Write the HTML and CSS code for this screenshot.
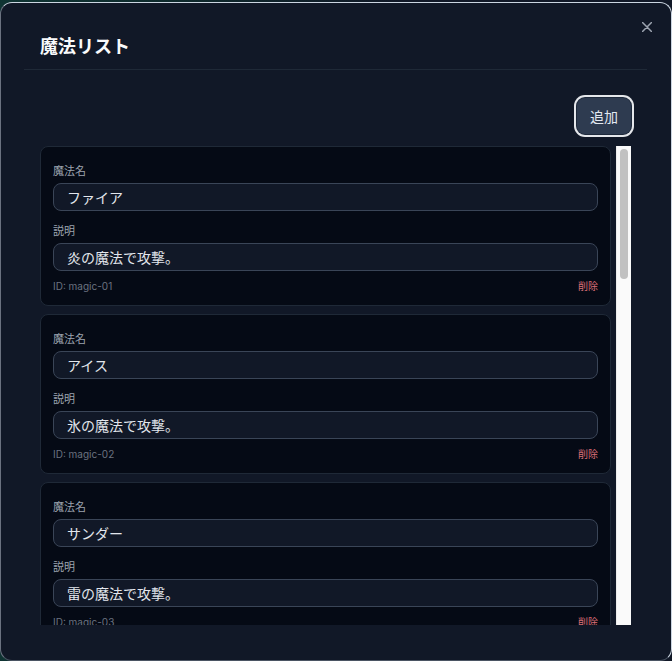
FILE: index.html
```html
<!DOCTYPE html>
<html lang="ja">
<head>
<meta charset="utf-8">
<title>魔法リスト</title>
<link rel="stylesheet" href="styles.css">
</head>
<body>
<div class="modal">
  <button class="close" aria-label="閉じる">
    <svg width="10" height="10" viewBox="0 0 10 10"><path d="M0.5 0.5 L9.5 9.5 M9.5 0.5 L0.5 9.5" stroke="#9ca3af" stroke-width="1.5" stroke-linecap="round" fill="none"/></svg>
  </button>
  <div class="header"><h2 class="title">魔法リスト</h2></div>
  <div class="body">
    <div class="toolbar"><button class="add">追加</button></div>
    <div class="scroller">
      <div class="list">
        <div class="card">
          <label class="label">魔法名</label><input class="input" value="ファイア">
          <label class="label gap">説明</label><input class="input" value="炎の魔法で攻撃。">
          <div class="foot"><span class="id">ID: magic-01</span><span class="del">削除</span></div>
        </div>
        <div class="card">
          <label class="label">魔法名</label><input class="input" value="アイス">
          <label class="label gap">説明</label><input class="input" value="氷の魔法で攻撃。">
          <div class="foot"><span class="id">ID: magic-02</span><span class="del">削除</span></div>
        </div>
        <div class="card">
          <label class="label">魔法名</label><input class="input" value="サンダー">
          <label class="label gap">説明</label><input class="input" value="雷の魔法で攻撃。">
          <div class="foot"><span class="id">ID: magic-03</span><span class="del">削除</span></div>
        </div>
      </div>
      <div class="track"><div class="thumb"></div></div>
    </div>
  </div>
</div>
</body>
</html>
```

FILE: styles.css
```css
* { box-sizing: border-box; }
html, body { margin: 0; height: 661px; overflow: hidden; }
body {
  background: linear-gradient(90deg, #0f3433 0%, #0e2a2c 25%, #111827 60%, #111827 100%);
  font-family: "Inter", "Noto Sans CJK JP", "Noto Sans", sans-serif;
  color: #e5e7eb;
}
.modal {
  position: relative;
  margin-top: 2px;
  height: 659px;
  background: #111827;
  border: 1px solid #cbd5e1;
  border-left-color: #6b7280;
  border-bottom-color: #4b5563;
  border-radius: 12px;
  display: flex;
  flex-direction: column;
}
.close {
  position: absolute;
  top: 19px;
  right: 19px;
  width: 10px;
  height: 10px;
  padding: 0;
  border: 0;
  background: none;
  display: flex;
}
.header {
  margin: 0 24px 0 23px;
  padding: 30px 16px 8px;
  border-bottom: 1px solid #1f2937;
}
.title {
  margin: 0;
  font-size: 18px;
  line-height: 28px;
  font-weight: 700;
  color: #f9fafb;
}
.body {
  padding: 28px 40px 0 39px;
  display: flex;
  flex-direction: column;
  gap: 12px;
}
.toolbar { display: flex; justify-content: flex-end; }
.add {
  height: 36px;
  padding: 0 13px;
  border: 0;
  border-radius: 8px;
  background: #2e3b50;
  color: #e2e8f0;
  font-family: inherit;
  font-size: 14px;
  box-shadow: 0 0 0 1px #1e293b, 0 0 0 3px #e5e7eb;
}
.scroller {
  height: 479px;
  display: flex;
  gap: 5px;
}
.list {
  flex: 1;
  min-width: 0;
  overflow: hidden;
  display: flex;
  flex-direction: column;
  gap: 8px;
}
.track {
  flex: none;
  width: 15px;
  background: #fafafa;
  border-left: 1px solid #ececec;
  padding: 3px 3px 0 3px;
}
.thumb {
  height: 130px;
  border-radius: 4px;
  background: #c1c1c1;
}
.card {
  flex: none;
  background: #050a15;
  border: 1px solid #1f2937;
  border-radius: 8px;
  padding: 16px 12px 11px;
  display: flex;
  flex-direction: column;
}
.label {
  font-size: 11px;
  line-height: 16px;
  margin-bottom: 4px;
  color: #9ca3af;
}
.label.gap { margin-top: 12px; }
.input {
  height: 28px;
  width: 100%;
  padding: 0 13px;
  border: 1px solid #3a4557;
  border-radius: 8px;
  background: #111827;
  color: #e2e6ec;
  font-family: inherit;
  font-size: 14px;
  outline: none;
}
.foot {
  margin-top: 7px;
  display: flex;
  justify-content: space-between;
  font-size: 10px;
  line-height: 16px;
}
.id { color: #6b7280; }
.del { color: #dc6f78; }
```
